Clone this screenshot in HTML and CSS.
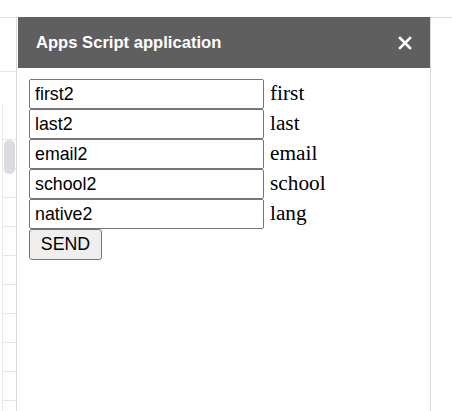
FILE: index.html
```html
<!DOCTYPE html>
<html lang="en">
<head>
  <meta charset="UTF-8" />
  <meta name="viewport" content="width=device-width, initial-scale=1" />
  <title>Apps Script application</title>
  <link rel="stylesheet" href="styles.css">
</head>
<body>
  <!-- spreadsheet behind the dialog -->
  <div class="sheet">
    <div class="sheet-head"></div>
    <div class="sheet-rows"></div>
    <div class="sheet-thumb"></div>
  </div>
  <div class="side-panel"></div>

  <div class="dialog">
    <div class="dialog-header">
      <span class="dialog-title">Apps Script application</span>
      <button class="dialog-close" aria-label="Close">
        <svg width="14" height="14" viewBox="0 0 14 14">
          <path d="M2 2 L12 12 M12 2 L2 12" stroke="#fff" stroke-width="2.6" stroke-linecap="square" fill="none"/>
        </svg>
      </button>
    </div>
    <form class="dialog-body">
      <div class="field"><input type="text" value="first2"><label>first</label></div>
      <div class="field"><input type="text" value="last2"><label>last</label></div>
      <div class="field"><input type="text" value="email2"><label>email</label></div>
      <div class="field"><input type="text" value="school2"><label>school</label></div>
      <div class="field"><input type="text" value="native2"><label>lang</label></div>
      <div><button type="button" class="send">SEND</button></div>
    </form>
  </div>
</body>
</html>
```

FILE: styles.css
```css
body {
  margin: 0;
  background: #fff;
  height: 411px;
  overflow: hidden;
  position: relative;
  font-family: 'Liberation Sans', Arial, sans-serif;
}

/* Sheet strip on the left */
.sheet {
  position: absolute;
  left: 0;
  top: 17px;
  bottom: 0;
  width: 16px;
  border-top: 1px solid #e0e0e0;
  border-right: 1px solid #dadada;
}

.sheet-head {
  height: 53px;
  border-bottom: 1px solid #e6e6e6;
}

.sheet-rows {
  position: absolute;
  left: 2px;
  right: 0;
  top: 85px;
  bottom: 0;
  border-left: 1px solid #e8e8e8;
  background: repeating-linear-gradient(to bottom,
    transparent 0, transparent 28px, #e6e6e6 28px, #e6e6e6 29px);
  background-position: 0 8px;
}

.sheet-thumb {
  position: absolute;
  left: 4px;
  top: 122px;
  width: 11px;
  height: 34px;
  border-radius: 5px;
  background: #dadce0;
}

.side-panel {
  position: absolute;
  left: 430px;
  right: 0;
  top: 17px;
  bottom: 0;
  border-top: 1px solid #dadada;
  border-left: 1px solid #dadada;
}

/* Dialog */
.dialog {
  position: absolute;
  left: 18px;
  top: 17px;
  width: 412px;
  bottom: 0;
  background: #fff;
}

.dialog-header {
  height: 51px;
  background: #5f5f5f;
  display: flex;
  align-items: center;
  justify-content: space-between;
  padding: 0 18px;
}

.dialog-title {
  color: #fff;
  font-size: 16.6px;
  font-weight: 700;
}

.dialog-close {
  background: none;
  border: none;
  padding: 0;
  width: 14px;
  height: 14px;
  display: flex;
  cursor: pointer;
}

.dialog-body {
  padding: 11px 11px;
  display: flex;
  flex-direction: column;
}

.field {
  display: flex;
  align-items: baseline;
  gap: 6px;
}

.field input {
  box-sizing: border-box;
  width: 235px;
  height: 30px;
  margin: 0;
  padding: 0 5px;
  border: 1px solid #767676;
  border-radius: 2px;
  font-family: 'Liberation Sans', Arial, sans-serif;
  font-size: 17.8px;
  color: #000;
  background: #fff;
}

.field label {
  font-family: 'Liberation Serif', 'Times New Roman', serif;
  font-size: 21.3px;
  color: #000;
}

.send {
  box-sizing: border-box;
  width: 73px;
  height: 31px;
  margin: 0;
  padding: 0;
  background: #efefef;
  border: 1px solid #767676;
  border-radius: 3px;
  font-family: 'Liberation Sans', Arial, sans-serif;
  font-size: 17.8px;
  color: #000;
}
```
